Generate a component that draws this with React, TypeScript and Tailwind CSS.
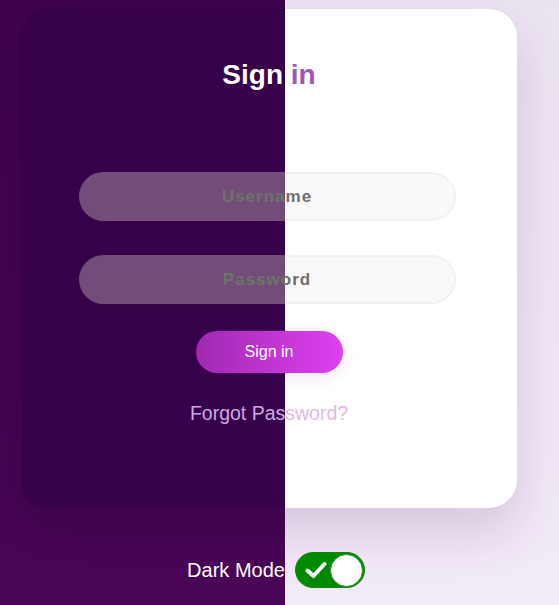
import React from 'react';

const font = { fontFamily: '"Liberation Sans", Arial, sans-serif' };

const Check: React.FC = () => (
  <svg width="22" height="18" viewBox="0 0 22 18" fill="none">
    <path d="M2.5 9.5 L8.5 15 L19.5 3" stroke="white" strokeWidth="4" strokeLinecap="round" strokeLinejoin="round" />
  </svg>
);

const Page: React.FC<{ dark: boolean }> = ({ dark }) => {
  const input = `w-[377px] h-[49px] ml-[-4px] rounded-full flex items-center justify-center text-[17px] font-bold tracking-[1px] ${
    dark ? 'bg-[#744c7a] text-[#6a7468]' : 'bg-[#f9f9f9] border-2 border-[#f1f1f1] text-[#6f6f6f]'
  }`;

  return (
    <div
      className={`w-[559px] h-[605px] flex flex-col items-center ${
        dark ? 'bg-gradient-to-b from-[#40034f] to-[#4a0558]' : 'bg-gradient-to-b from-[#ece3f1] to-[#f3eaf8]'
      }`}
      style={font}
    >
      <div
        className={`mt-[9px] self-start ml-[21px] w-[496px] h-[499px] rounded-[28px] flex flex-col items-center ${
          dark
            ? 'bg-[#36004a] shadow-[0_20px_50px_rgba(20,0,30,0.25)]'
            : 'bg-white shadow-[0_24px_50px_rgba(70,20,90,0.16)]'
        }`}
      >
        <h2
          className={`mt-[48px] text-[28px] leading-[36px] font-bold ${dark ? 'text-white' : 'text-[#9b59b6]'}`}
        >
          Sign in
        </h2>
        <div className={`mt-[79px] ${input}`}>Username</div>
        <div className={`mt-[34px] ${input}`}>Password</div>
        <button
          className={`mt-[27px] w-[147px] h-[42px] rounded-full bg-gradient-to-r from-[#a02ab0] to-[#e040f2] text-white text-[16px] ${
            dark ? '' : 'shadow-[0_4px_16px_rgba(120,40,140,0.12)]'
          }`}
        >
          Sign in
        </button>
        <p className={`mt-[28px] text-[19.5px] leading-[24px] ${dark ? 'text-[#cfa8e2]' : 'text-[#e2b8ea]'}`}>
          Forgot Password?
        </p>
      </div>
      <div className="mt-[44px] flex items-center gap-[10px] ml-[-7px]">
        <span className={`text-[20px] leading-[24px] ${dark ? 'text-white' : 'text-[#3a0a4a]'}`}>Dark Mode</span>
        <div className="w-[70px] h-[36px] rounded-full bg-[#008a00] border border-[#0a8a0a] flex items-center justify-between pl-[9px] pr-[1px]">
          <Check />
          <div className="w-[33px] h-[33px] rounded-full bg-white border border-[#2a8a2a]" />
        </div>
      </div>
    </div>
  );
};

export default function App() {
  return (
    <div className="relative w-[559px] h-[605px] overflow-hidden">
      <Page dark={false} />
      <div className="absolute left-0 top-0 w-[285px] h-[605px] overflow-hidden">
        <Page dark={true} />
      </div>
    </div>
  );
}
